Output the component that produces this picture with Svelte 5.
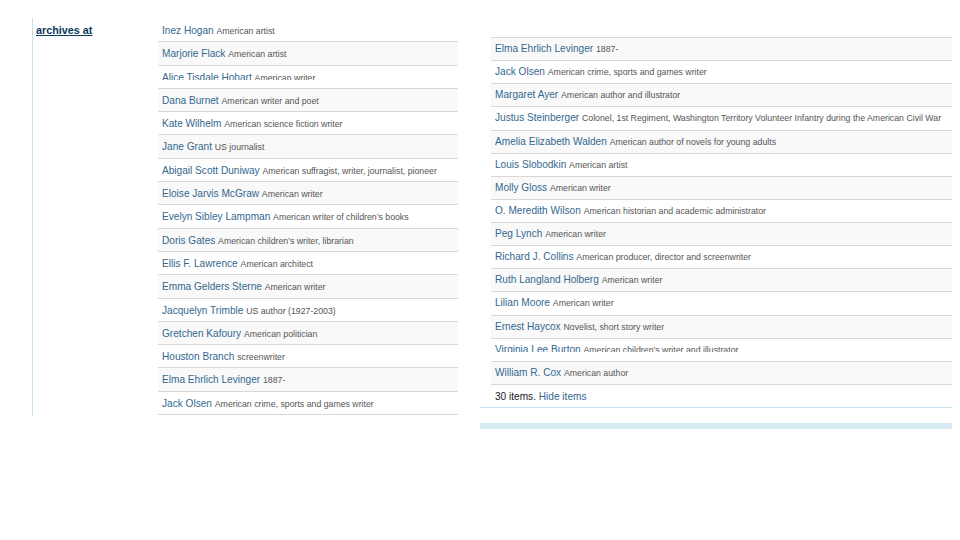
<script>
  const left = [
    ['Inez Hogan','American artist'],['Marjorie Flack','American artist'],['Alice Tisdale Hobart','American writer'],
    ['Dana Burnet','American writer and poet'],['Kate Wilhelm','American science fiction writer'],['Jane Grant','US journalist'],
    ['Abigail Scott Duniway','American suffragist, writer, journalist, pioneer'],['Eloise Jarvis McGraw','American writer'],
    ['Evelyn Sibley Lampman','American writer of children\u2019s books'],['Doris Gates','American children\u2019s writer, librarian'],
    ['Ellis F. Lawrence','American architect'],['Emma Gelders Sterne','American writer'],['Jacquelyn Trimble','US author (1927-2003)'],
    ['Gretchen Kafoury','American politician'],['Houston Branch','screenwriter'],['Elma Ehrlich Levinger','1887-'],
    ['Jack Olsen','American crime, sports and games writer']
  ];
  const right = [
    ['Elma Ehrlich Levinger','1887-'],['Jack Olsen','American crime, sports and games writer'],['Margaret Ayer','American author and illustrator'],
    ['Justus Steinberger','Colonel, 1st Regiment, Washington Territory Volunteer Infantry during the American Civil War'],
    ['Amelia Elizabeth Walden','American author of novels for young adults'],['Louis Slobodkin','American artist'],['Molly Gloss','American writer'],
    ['O. Meredith Wilson','American historian and academic administrator'],['Peg Lynch','American writer'],
    ['Richard J. Collins','American producer, director and screenwriter'],['Ruth Langland Holberg','American writer'],['Lilian Moore','American writer'],
    ['Ernest Haycox','Novelist, short story writer'],['Virginia Lee Burton','American children\u2019s writer and illustrator'],['William R. Cox','American author']
  ];
</script>

<div class="page">
  <div class="side">
    <div class="label">archives at</div>
    <ul class="list left">
      {#each left as [name, desc], i}
        <li class:alt={i % 2 === 1} class:cut={i === 2}><span><a href="#a">{name}</a> <small>{desc}</small></span></li>
      {/each}
    </ul>
  </div>
  <div class="main">
    <ul class="list right">
      {#each right as [name, desc], i}
        <li class:alt={i % 2 === 0} class:cut={i === 13}><span><a href="#a">{name}</a> <small>{desc}</small></span></li>
      {/each}
    </ul>
    <div class="foot"><span class="count">30 items.</span> <a href="#a">Hide items</a></div>
    <div class="band"></div>
  </div>
</div>

<style>
  :global(body) { margin: 0; background: #fff; font-family: "Liberation Sans", Arial, sans-serif; }
  .page { display: flex; align-items: flex-start; width: 960px; height: 540px; padding: 18px 8px 0 32px; box-sizing: border-box; }
  .side { display: flex; width: 426px; height: 398px; border-left: 1px solid #c6e0ec; flex: none; }
  .label { width: 125px; box-sizing: border-box; padding: 5px 0 0 3px; font-size: 10.8px; line-height: 14px; font-weight: bold; color: #0b3a5a; text-decoration: underline; flex: none; }
  .list { list-style: none; margin: 0; padding: 0; }
  .left { width: 300px; flex: none; padding-top: 1px; }
  li { box-sizing: border-box; border-bottom: 1px solid #d8d8d8; font-size: 10.1px; line-height: 15px; white-space: nowrap; overflow: hidden; }
  .left li { height: 23.3px; padding: 4px 4px 0; }
  .right li { height: 23.13px; padding: 3px 4px 0; }
  li.alt { background: #f9f9f9; }
  li.cut span { display: block; height: 10.5px; overflow: hidden; }
  a { color: #33688f; text-decoration: none; }
  small { font-size: 8.75px; color: #555; }
  .main { margin-left: 21px; width: 472px; padding-top: 19px; flex: none; }
  .right { margin-left: 11px; border-top: 1px solid #d8d8d8; }
  .foot { height: 23px; box-sizing: border-box; padding: 4px 4px 0 15px; font-size: 10.1px; line-height: 15px; border-bottom: 1px solid #c6e0ec; }
  .count { color: #222; }
  .band { height: 6px; margin-top: 15px; background: #d8ebf5; }
</style>
